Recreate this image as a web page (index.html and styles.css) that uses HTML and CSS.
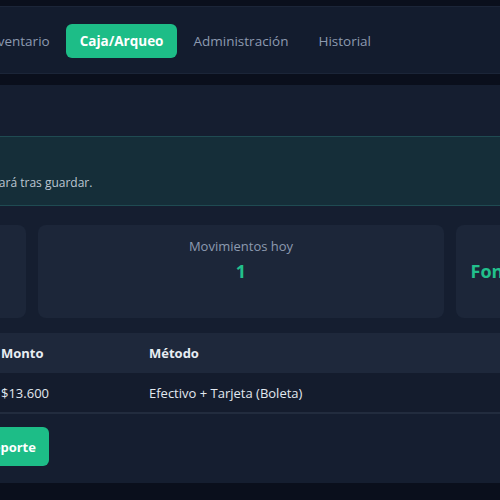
FILE: index.html
```html
<!DOCTYPE html>
<html>
<head>
	<title>Caja / Arqueo</title>
	<link rel="stylesheet" href="styles.css">
</head>
<body>
<div class="app">

	<!--========== NAV TABS =============-->
	<nav class="top__nav">
		<a class="nav__tab" href="#">Ventas</a>
		<a class="nav__tab" href="#">Inventario</a>
		<a class="nav__tab nav__tab--active" href="#">Caja/Arqueo</a>
		<a class="nav__tab" href="#">Administración</a>
		<a class="nav__tab" href="#">Historial</a>
	</nav>

	<!--========== MAIN PANEL =============-->
	<div class="panel">
		<h2 class="panel__title">Arqueo de caja</h2>

		<div class="info__box">
			<strong>Resumen del turno</strong>
			<p>Los montos se calculan con la venta de hoy. El arqueo se bloqueará tras guardar.</p>
		</div>

		<div class="stats">
			<div class="stat__card">
				<span class="stat__label">Total vendido</span>
				<span class="stat__value">$13.600</span>
			</div>
			<div class="stat__card">
				<span class="stat__label">Movimientos hoy</span>
				<span class="stat__value">1</span>
			</div>
			<div class="stat__card">
				<span class="stat__label">Estado</span>
				<span class="stat__value">Fondo inicial pendiente de registro de hoy</span>
			</div>
		</div>

		<table class="moves">
			<thead>
				<tr>
					<th class="col__date">Fecha</th>
					<th class="col__item">Detalle</th>
					<th class="col__amount">Monto</th>
					<th>Método</th>
				</tr>
			</thead>
			<tbody>
				<tr>
					<td>Hoy 10:24</td>
					<td>Venta #0001</td>
					<td>$13.600</td>
					<td>Efectivo + Tarjeta (Boleta)</td>
				</tr>
			</tbody>
		</table>

		<div class="actions">
			<button class="action__btn">Guardar arqueo</button>
			<button class="action__btn">Imprimir resumen</button>
			<button class="action__btn">Exportar reporte</button>
		</div>
	</div>

</div>
</body>
</html>
```

FILE: styles.css
```css
*{
	margin: 0;
	padding: 0;
	box-sizing: border-box;
}

a{
	text-decoration: none;
}

body{
	background-color: #0a0f1c;
	font-family: "Open Sans", "Noto Sans", sans-serif;
	color: #e2e8f0;
	overflow: hidden;
}

/* the app is wider than the window, shifted so the Caja tab sits in view */
.app{
	width: 1283px;
	margin-left: -400px;
	padding-top: 6px;
}

.top__nav{
	display: flex;
	align-items: center;
	gap: 2px;
	height: 68px;
	padding-left: 299px;
	padding-top: 2px;
	background-color: #131c2e;
	border-top: 1px solid #1b2538;
	border-bottom: 1px solid #1b2538;
}

.nav__tab{
	padding: 7px 14px;
	border-radius: 6px;
	font-size: 13.5px;
	line-height: 20px;
	color: #8d9ab0;
}

.nav__tab--active{
	background-color: #1dbd87;
	color: #fff;
	font-weight: 700;
}

.panel{
	margin-top: 11px;
	padding: 0 20px 17px;
	background-color: #151e30;
}

.panel__title{
	height: 51px;
	line-height: 51px;
	font-size: 18px;
	color: #e2e8f0;
}

.info__box{
	padding: 13px 16px 13px 21px;
	background-color: #152e39;
	border-top: 1px solid #1f4b52;
	border-bottom: 1px solid #1f4b52;
	font-size: 14px;
	line-height: 20px;
}

.info__box p{
	margin-top: 4px;
	font-size: 12px;
	line-height: 18px;
	color: #bcc6d2;
}

.stats{
	display: grid;
	grid-template-columns: repeat(3, 406px);
	gap: 12px;
	margin-top: 19px;
}

.stat__card{
	display: flex;
	flex-direction: column;
	align-items: center;
	height: 93px;
	padding-top: 12px;
	background-color: #1c2639;
	border-radius: 8px;
	white-space: nowrap;
}

.stat__label{
	font-size: 13px;
	line-height: 18px;
	color: #8d9ab0;
}

.stat__value{
	margin-top: 4px;
	font-size: 18px;
	line-height: 24px;
	font-weight: 700;
	color: #22c08c;
}

.moves{
	width: 100%;
	margin-top: 15px;
	border-collapse: collapse;
	font-size: 13px;
	text-align: left;
}

.moves th{
	height: 40px;
	padding: 0 12px;
	background-color: #1e283b;
	font-weight: 700;
	color: #e8edf3;
}

.moves td{
	height: 40px;
	padding: 0 12px;
	background-color: #141c2d;
	border-bottom: 2px solid #222c3e;
}

.col__date{
	width: 180px;
}

.col__item{
	width: 189px;
}

.col__amount{
	width: 148px;
}

.actions{
	display: flex;
	gap: 10px;
	margin-top: 13px;
}

.action__btn{
	height: 39px;
	padding: 0 13px;
	border: none;
	border-radius: 6px;
	background-color: #1dbd87;
	color: #fff;
	font-family: inherit;
	font-size: 13px;
	font-weight: 700;
}
```
